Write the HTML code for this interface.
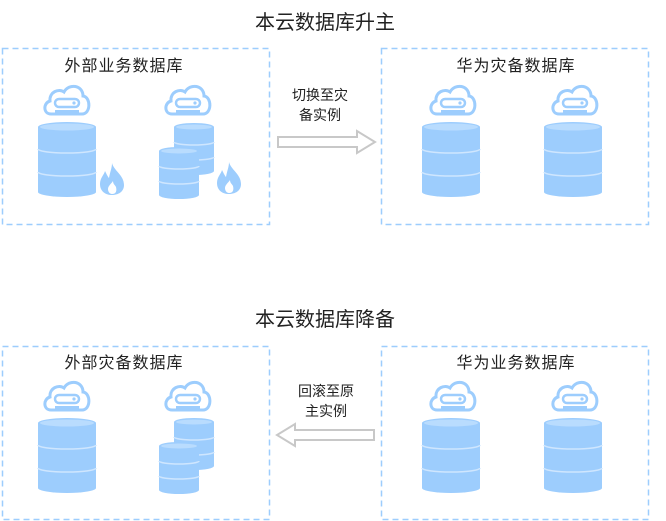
<!DOCTYPE html>
<html><head><meta charset="utf-8"><style>
html,body{margin:0;padding:0;background:#fff;}
svg{display:block;}
text{font-family:"Liberation Sans","Noto Sans CJK SC",sans-serif;fill:#222;}
</style></head><body>
<svg width="666" height="521" viewBox="0 0 666 521" xmlns="http://www.w3.org/2000/svg">
<defs>
<g id="cloud">
 <path d="M-16,15 C-24,15 -24,4 -17,2 C-18,-7 -8,-11 -3,-7 C2,-16 16,-14 16,-3 C24,-2 24,15 15,15 Z" fill="none" stroke="#9dcdfd" stroke-width="3"/>
 <rect x="-12" y="0" width="24" height="8" rx="4" fill="#fff" stroke="#9dcdfd" stroke-width="2.5"/>
 <circle cx="7" cy="4" r="1.6" fill="#9dcdfd"/>
 <rect x="-12" y="11" width="24" height="2.5" fill="#9dcdfd"/>
</g>
<g id="bigcyl">
 <path d="M0,5 A29,5 0 0 1 58,5 L58,70 A29,5 0 0 1 0,70 Z" fill="#9dcdfd"/>
 <ellipse cx="29" cy="5" rx="27" ry="3.5" fill="#b9dcfe"/>
 <path d="M0,27 A29,4 0 0 0 58,27" fill="none" stroke="#cfe6fe" stroke-width="1.5"/>
 <path d="M0,50 A29,4 0 0 0 58,50" fill="none" stroke="#cfe6fe" stroke-width="1.5"/>
</g>
<g id="smcyl">
 <path d="M0,4 A20,4 0 0 1 40,4 L40,48 A20,4 0 0 1 0,48 Z" fill="#9dcdfd"/>
 <ellipse cx="20" cy="4" rx="18" ry="2.5" fill="#b9dcfe"/>
 <path d="M0,19 A20,3 0 0 0 40,19" fill="none" stroke="#cfe6fe" stroke-width="1.5"/>
 <path d="M0,34 A20,3 0 0 0 40,34" fill="none" stroke="#cfe6fe" stroke-width="1.5"/>
</g>
<g id="flame">
 <path d="M12,0 C14,8 24,12 24,22 C24,29 18,32 12,32 C5,32 0,28 0,21 C0,15 4,12 5,8 C7,12 8,14 9,15 C10,9 12,5 12,0 Z M12,31 C16,31 17,28 16,24 C15,22 13,21 13,18 C11,21 8,23 8,26 C8,29 10,31 12,31 Z" fill="#9dcdfd" fill-rule="evenodd"/>
</g>
</defs>

<text x="325" y="29" font-size="20" text-anchor="middle">本云数据库升主</text>
<text x="325" y="326" font-size="20" text-anchor="middle">本云数据库降备</text>

<g fill="none" stroke="#9dcdfd" stroke-width="1.5" stroke-dasharray="6,4">
 <rect x="2.5" y="48.5" width="267" height="176"/>
 <rect x="381.5" y="48.5" width="267" height="176"/>
 <rect x="2.5" y="346.5" width="267" height="173"/>
 <rect x="381.5" y="346.5" width="267" height="173"/>
</g>

<g font-size="16" letter-spacing="1" text-anchor="middle">
<text x="124" y="71">外部业务数据库</text>
<text x="516" y="71">华为灾备数据库</text>
<text x="124" y="368">外部灾备数据库</text>
<text x="516" y="368">华为业务数据库</text>
</g>

<text x="320" y="100" font-size="14" text-anchor="middle">切换至灾</text>
<text x="320" y="120" font-size="14" text-anchor="middle">备实例</text>
<text x="326" y="396" font-size="14" text-anchor="middle">回滚至原</text>
<text x="326" y="416" font-size="14" text-anchor="middle">主实例</text>

<path d="M278,137 L357,137 L357,131 L375,142 L357,153 L357,147 L278,147 Z" fill="#fff" stroke="#c8c8c8" stroke-width="2"/>
<path d="M374,430 L295,430 L295,424 L277,435 L295,446 L295,440 L374,440 Z" fill="#fff" stroke="#c8c8c8" stroke-width="2"/>

<use href="#cloud" x="67" y="99"/>
<use href="#bigcyl" x="38" y="122"/>
<use href="#flame" x="100" y="163"/>
<use href="#cloud" x="188" y="99"/>
<use href="#smcyl" x="174" y="123"/>
<use href="#smcyl" x="159" y="147"/>
<use href="#flame" x="217" y="162"/>
<use href="#cloud" x="453" y="99"/>
<use href="#bigcyl" x="422" y="122"/>
<use href="#cloud" x="575" y="99"/>
<use href="#bigcyl" x="544" y="122"/>
<use href="#cloud" x="67" y="395"/>
<use href="#bigcyl" x="38" y="418"/>
<use href="#cloud" x="188" y="395"/>
<use href="#smcyl" x="174" y="418"/>
<use href="#smcyl" x="159" y="442"/>
<use href="#cloud" x="453" y="395"/>
<use href="#bigcyl" x="422" y="418"/>
<use href="#cloud" x="575" y="395"/>
<use href="#bigcyl" x="544" y="418"/>
</svg>
</body></html>
